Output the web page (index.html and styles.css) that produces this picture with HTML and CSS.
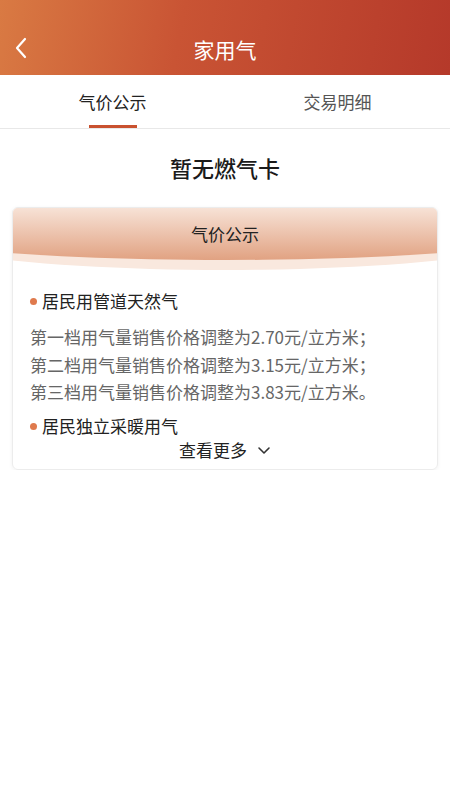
FILE: index.html
```html
<!DOCTYPE html>
<html lang="zh-CN">
  <head>
    <meta charset="UTF-8" />
    <meta name="viewport" content="width=device-width, initial-scale=1.0" />
    <title>家用气</title>
    <link rel="stylesheet" href="styles.css">
  </head>
  <body>
    <header class="top-bar">
      <span class="back">
        <svg width="14" height="22" viewBox="0 0 14 22">
          <path d="M11 2 L3 11 L11 20" fill="none" stroke="#fff" stroke-width="2.2" stroke-linecap="round" stroke-linejoin="round"/>
        </svg>
      </span>
      <h1 class="title">家用气</h1>
    </header>

    <nav class="tabs">
      <div class="tab active">气价公示</div>
      <div class="tab">交易明细</div>
    </nav>

    <div class="no-card">暂无燃气卡</div>

    <section class="card">
      <div class="card-head">
        <div class="card-head-band"></div>
        <div class="card-head-bg"></div>
        <span class="card-title">气价公示</span>
      </div>
      <div class="card-body">
        <div class="item-title">居民用管道天然气</div>
        <p class="item-line">第一档用气量销售价格调整为2.70元/立方米；</p>
        <p class="item-line">第二档用气量销售价格调整为3.15元/立方米；</p>
        <p class="item-line">第三档用气量销售价格调整为3.83元/立方米。</p>
        <div class="item-title second">居民独立采暖用气</div>
      </div>
      <div class="more">
        查看更多
        <svg width="14" height="10" viewBox="0 0 14 10">
          <path d="M2 3 L7 8 L12 3" fill="none" stroke="#333" stroke-width="1.6" stroke-linecap="round" stroke-linejoin="round"/>
        </svg>
      </div>
    </section>
  </body>
</html>
```

FILE: styles.css
```css
body {
  margin: 0;
  background: #fff;
  font-family: "Noto Sans CJK SC", "Noto Sans", sans-serif;
  color: #222;
}

/* Top bar */
.top-bar {
  height: 75px;
  background: linear-gradient(100deg, #d97a43 0%, #c95434 40%, #b5392a 100%);
  display: flex;
  align-items: flex-end;
  justify-content: center;
  position: relative;
}

.back {
  position: absolute;
  left: 14px;
  bottom: 16px;
  display: flex;
}

.title {
  margin: 0 0 12px;
  font-size: 21px;
  font-weight: normal;
  color: #fff;
  line-height: 28px;
}

/* Tabs */
.tabs {
  display: flex;
  height: 53px;
  border-bottom: 1px solid #e8e8e8;
}

.tab {
  flex: 1;
  display: flex;
  align-items: center;
  justify-content: center;
  font-size: 17px;
  color: #555;
  position: relative;
}

.tab.active {
  color: #222;
}

.tab.active::after {
  content: "";
  position: absolute;
  bottom: 0;
  left: 50%;
  width: 48px;
  margin-left: -24px;
  height: 3px;
  background: #c9512f;
}

.no-card {
  text-align: center;
  font-size: 22px;
  font-weight: 500;
  margin: 22px 0 24px;
  line-height: 32px;
  color: #1a1a1a;
}

/* Price card */
.card {
  margin: 0 12px;
  border: 1px solid #ececec;
  border-radius: 6px;
  box-shadow: 0 1px 4px rgba(0, 0, 0, 0.06);
  overflow: hidden;
}

.card-head {
  height: 62px;
  position: relative;
  display: flex;
  justify-content: center;
}

.card-head-bg,
.card-head-band {
  position: absolute;
  top: 0;
  left: -40%;
  width: 180%;
}

.card-head-bg {
  height: 52px;
  background: linear-gradient(#f7e2d6, #e1a282);
  border-radius: 0 0 50% 50% / 0 0 40px 40px;
}

.card-head-band {
  height: 62px;
  background: #f9e8de;
  border-radius: 0 0 50% 50% / 0 0 56px 56px;
}

.card-title {
  position: relative;
  font-size: 17px;
  line-height: 24px;
  margin-top: 14px;
  color: #222;
}

.card-body {
  padding: 19px 17px 0;
}

.item-title {
  font-size: 17px;
  line-height: 24px;
  color: #222;
  padding-left: 12px;
  position: relative;
  margin-bottom: 10px;
}

.item-title::before {
  content: "";
  position: absolute;
  left: 0;
  top: 9px;
  width: 7px;
  height: 7px;
  border-radius: 50%;
  background: #df7a4d;
}

.item-title.second {
  margin: 8px 0 0;
}

.item-line {
  margin: 0;
  font-size: 17px;
  line-height: 27.5px;
  color: #666;
}

.more {
  display: flex;
  align-items: center;
  justify-content: center;
  gap: 10px;
  font-size: 17px;
  color: #222;
  height: 24px;
  margin-bottom: 7px;
}
```
